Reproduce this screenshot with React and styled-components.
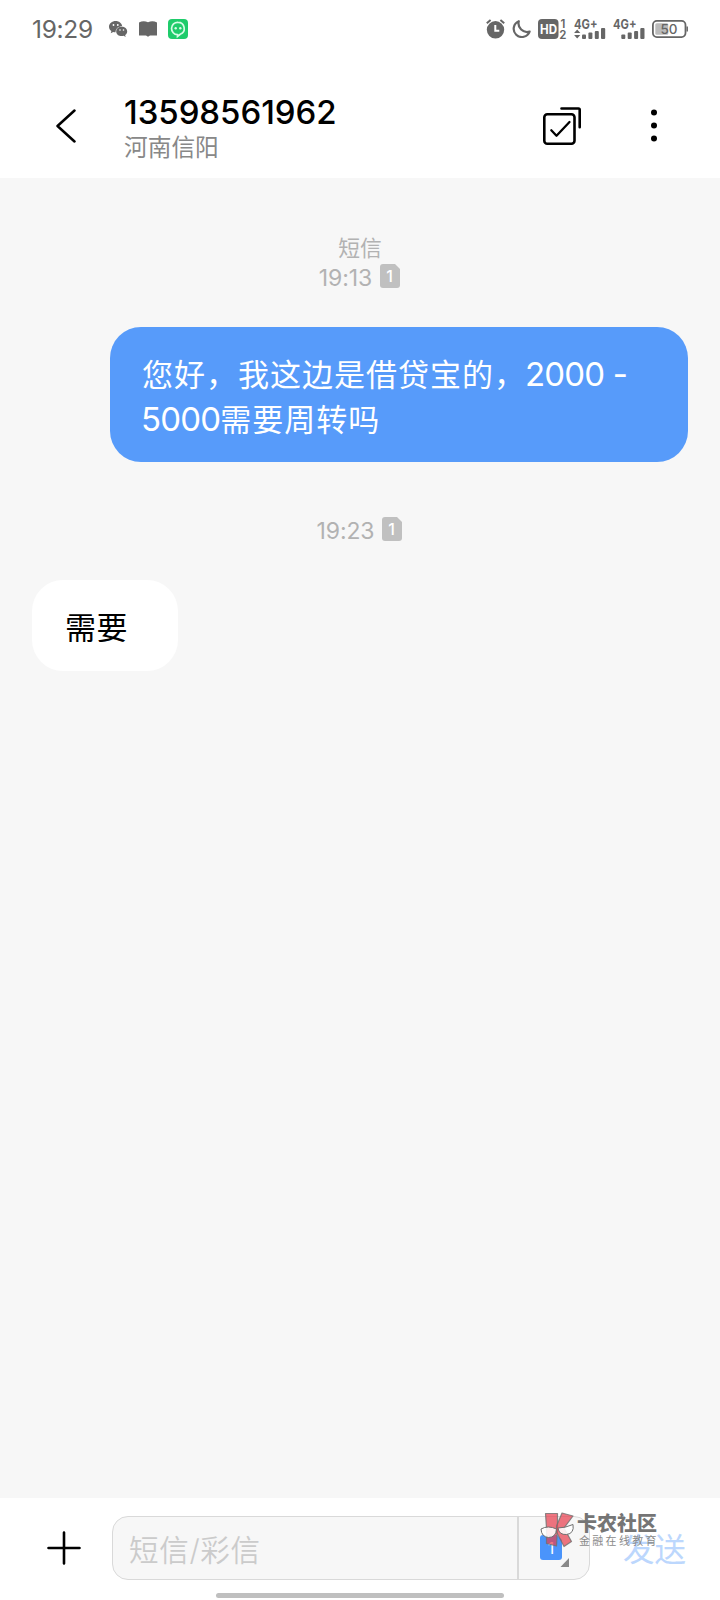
import React from 'react'
import styled, { createGlobalStyle } from 'styled-components';

const GlobalStyle = createGlobalStyle`
  * { box-sizing: border-box; }
  body {
    margin: 0;
    background: #fff;
    font-family: Inter, "Noto Sans CJK SC", sans-serif;
  }
`;

const Screen = styled.div`
  width: 720px;
  height: 1600px;
  display: flex;
  flex-direction: column;
  overflow: hidden;
  background: #fff;
`;

const StatusBar = styled.div`
  height: 58px;
  flex: none;
  display: flex;
  align-items: center;
  padding: 0 32px 0 32px;
  color: #666;
`;

const Clock = styled.span`
  width: 77px;
  font-size: 24.5px;
  line-height: 58px;
  letter-spacing: -0.3px;
`;

const StatusIcons = styled.div`
  display: flex;
  align-items: center;
  gap: ${(p) => p.$gap}px;
  margin-left: ${(p) => (p.$right ? 'auto' : 0)};
  svg { display: block; }
`;

const Header = styled.header`
  height: 120px;
  flex: none;
  display: flex;
  align-items: center;
  padding: 15px 63px 0 55px;

  svg { display: block; flex: none; }
`;

const Contact = styled.div`
  flex: 1;
  margin-left: 47px;
  padding-top: 7px;
`;

const Phone = styled.div`
  font-size: 33px;
  font-weight: 500;
  line-height: 38px;
  letter-spacing: -0.05px;
  color: #000;
`;

const Region = styled.div`
  font-size: 23.7px;
  line-height: 34px;
  color: #888;
`;

const HeaderActions = styled.div`
  display: flex;
  align-items: center;
  gap: 69px;
`;

const Thread = styled.main`
  flex: 1;
  display: flex;
  flex-direction: column;
  padding: 56px 32px 0;
  background: #f7f7f7;
`;

const Stamp = styled.div`
  display: flex;
  flex-direction: column;
  align-items: center;
  color: #b2b2b2;
  font-size: 21.8px;
  line-height: 28px;
`;

const StampRow = styled.div`
  display: flex;
  align-items: center;
  gap: 8px;
  height: 28px;
  padding-right: 1px;
  font-size: 23px;
  letter-spacing: -0.1px;

  span { padding-top: 3px; }
`;

const Bubble = styled.div`
  border-radius: 31px;
  font-size: 31px;
  line-height: 44px;
  letter-spacing: 1px;
`;

const SentBubble = styled(Bubble)`
  align-self: flex-end;
  width: 578px;
  height: 135px;
  margin: 37px 0 53px;
  padding: 25px 32px;
  color: #fff;
  background: #579bfa;
`;

const ReceivedBubble = styled(Bubble)`
  align-self: flex-start;
  width: 146px;
  height: 91px;
  margin-top: 37px;
  padding: 26px 33px;
  letter-spacing: 0.5px;
  color: #000;
  background: #fff;
`;

const Digits = styled.span`
  margin-left: -1px;
  font-size: 33px;
  letter-spacing: -0.8px;
`;

const Footer = styled.footer`
  position: relative;
  height: 102px;
  flex: none;
  display: flex;
  flex-direction: column;
  background: #fff;
`;

const Composer = styled.div`
  display: flex;
  align-items: center;
  padding: 18px 32px 0 47px;

  svg { display: block; flex: none; }
`;

const InputBox = styled.div`
  display: flex;
  width: 478px;
  height: 64px;
  margin-left: 31px;
  border: 1px solid #d9d9d9;
  border-radius: 16px;
  background: #f7f7f7;
`;

const Placeholder = styled.div`
  flex: 1;
  padding: 2px 0 0 16px;
  font-size: 29.5px;
  font-weight: 350;
  line-height: 62px;
  letter-spacing: 0.7px;
  color: #cbcbcb;
`;

const SimPicker = styled.div`
  width: 72px;
  padding: 13px 0 0 21px;
  border-left: 2px solid #d9d9d9;
`;

const Send = styled.div`
  margin-left: 33px;
  padding-top: 4px;
  font-size: 31.5px;
  line-height: 60px;
  white-space: nowrap;
  color: #bcd7fd;
`;

const HomeBar = styled.div`
  width: 288px;
  height: 5px;
  margin: 13px auto 0;
  border-radius: 3px;
  background: #bfbfbf;
`;

// sits on top of the composer
const Watermark = styled.div`
  position: absolute;
  left: 540px;
  top: 14px;
  display: flex;
  gap: 3px;

  svg { display: block; }
`;

const BrandName = styled.div`
  padding-top: 1px;
  font-size: 20px;
  font-weight: 900;
  line-height: 22px;
  white-space: nowrap;
  color: #757575;
`;

const BrandTag = styled.div`
  padding-left: 2px;
  font-size: 11px;
  line-height: 13px;
  letter-spacing: 2.3px;
  white-space: nowrap;
  color: #8a8a8a;
`;

const WechatIcon = () => (
  <svg width="19" height="17" viewBox="0 0 19 17">
    <path fill="#666" d="M6.8 0C3 0 0 2.5 0 5.7c0 1.8.9 3.3 2.4 4.3l-.7 2.2 2.5-1.3c.8.2 1.500.3 2.300.3C6.700 7.500 9.500 5.200 13.200 5.200 12.700 2.200 10 0 6.800 0z" />
    <path fill="#666" d="M12.700 5.800c-3.100 0-5.500 2-5.500 4.600s2.400 4.700 5.500 4.700c.7 0 1.300-.1 1.900-.3l2.100 1.200-.6-1.900c1.300-.9 2.100-2.200 2.100-3.700 0-2.600-2.400-4.600-5.500-4.600z" />
    <g fill="#fff">
      <circle cx="4.500" cy="4" r="0.900" />
      <circle cx="8.800" cy="4" r="0.900" />
      <circle cx="11" cy="9" r="0.800" />
      <circle cx="14.500" cy="9" r="0.800" />
    </g>
  </svg>
)

const BookIcon = () => (
  <svg width="18" height="16" viewBox="0 0 18 16">
    <path fill="#666" d="M0 1.500Q4.500-1 9 1.300Q13.500-1 18 1.500V14.500H11L9 15.700L7 14.500H0z" />
  </svg>
)

const GreenIcon = () => (
  <svg width="20" height="20" viewBox="0 0 20 20">
    <rect width="20" height="20" rx="4" fill="#1fcc6b" />
    <path d="M10 3.300a6.200 6.200 0 0 1 2.200 12L9.500 17.500V15.700A6.200 6.200 0 0 1 10 3.300z" fill="none" stroke="#d8fbe6" strokeWidth="1.700" />
    <circle cx="7.700" cy="9.200" r="1.200" fill="#d8fbe6" />
    <circle cx="12.300" cy="9.200" r="1.200" fill="#d8fbe6" />
  </svg>
)

const AlarmIcon = () => (
  <svg width="19" height="20" viewBox="0 0 19 20">
    <circle cx="9.500" cy="10.800" r="8.700" fill="#666" />
    <path d="M9.300 6v5.800h4" fill="none" stroke="#fff" strokeWidth="2" />
    <path d="M0.800 4.300L4.600 1M18.200 4.300L14.400 1" stroke="#666" strokeWidth="2" />
  </svg>
)

const MoonIcon = () => (
  <svg width="19" height="18" viewBox="0 0 19 18">
    <path d="M6.800 1.200A8.200 8.200 0 1 0 17.600 11.600A8.600 8.600 0 0 1 6.800 1.200z" fill="none" stroke="#666" strokeWidth="2.200" strokeLinejoin="round" />
  </svg>
)

const HdIcon = () => (
  <svg width="29" height="32" viewBox="0 -6 29 32" fontFamily="Inter" fontWeight="700">
    <rect width="20.500" height="20" rx="4" fill="#666" />
    <text x="2" y="14.800" fontSize="13" textLength="17" lengthAdjust="spacingAndGlyphs" fill="#fff">HD</text>
    <text x="22.500" y="8.500" fontSize="11.500" fontWeight="600" fill="#666">1</text>
    <text x="21.300" y="19.800" fontSize="11.500" fontWeight="600" fill="#666">2</text>
  </svg>
)

const SignalIcon = ({ arrows }) => {
  const x = arrows ? 8 : 8.3
  return (
    <svg width="32" height="32" viewBox="0 -6 32 32">
      <text x="0" y="9.500" fontSize="13.500" fontWeight="700" fontFamily="Inter" textLength="23.500" lengthAdjust="spacingAndGlyphs" fill="#666">4G+</text>
      {arrows && <path d="M3.200 10.500L6.300 14H0.100zM3.200 19.500L6.300 16H0.100z" fill="#666" />}
      <g fill="#666">
        <rect x={x} y="15.500" width="4" height="4.500" rx="1" />
        <rect x={x + 6.4} y="13.500" width="4" height="6.500" rx="1" />
        <rect x={x + 12.8} y="12" width="4" height="8" rx="1" />
        <rect x={x + 19} y="9" width="4.200" height="11" rx="1" />
      </g>
    </svg>
  )
}

const BatteryIcon = () => (
  <svg width="36" height="18" viewBox="0 0 36 18">
    <rect x="0.900" y="0.900" width="32.600" height="16.200" rx="4" fill="none" stroke="#666" strokeWidth="1.800" />
    <rect x="3.300" y="3.200" width="13" height="11.600" rx="1.500" fill="#bbb" />
    <path d="M35.200 6.500V11.500" stroke="#666" strokeWidth="1.500" />
    <text x="17" y="13.700" textAnchor="middle" fontSize="13.500" fontWeight="500" fontFamily="Inter" fill="#666">50</text>
  </svg>
)

const BackIcon = () => (
  <svg width="22" height="34" viewBox="0 0 22 34">
    <path d="M19.500 1.500L2.500 17L19.500 32.500" fill="none" stroke="#000" strokeWidth="2.500" strokeLinecap="round" strokeLinejoin="round" />
  </svg>
)

const SelectIcon = () => (
  <svg width="39" height="38" viewBox="0 0 39 38">
    <g fill="none" stroke="#000" strokeWidth="2.600" strokeLinecap="round" strokeLinejoin="round">
      <rect x="1.300" y="7.200" width="30.200" height="29.500" rx="3" />
      <path d="M8.300 23.300L13.500 28.700L26.500 15" strokeWidth="2.300" />
      <path d="M18.500 1.500H35.500Q36.700 1.500 36.700 2.700V20.300" />
    </g>
  </svg>
)

const MoreIcon = () => (
  <svg width="6" height="33" viewBox="0 0 6 33">
    <circle cx="3" cy="3.500" r="3" />
    <circle cx="3" cy="16.500" r="3" />
    <circle cx="3" cy="29.500" r="3" />
  </svg>
)

const SimIcon = () => (
  <svg width="20" height="24" viewBox="0 0 20 24">
    <path d="M3 0H15L20 5V21Q20 24 17 24H3Q0 24 0 21V3Q0 0 3 0z" fill="#c0c0c0" />
    <text x="9.500" y="17.700" textAnchor="middle" fontSize="16" fontWeight="500" fontFamily="Inter" fill="#fff">1</text>
  </svg>
)

const SimPickerIcon = () => (
  <svg width="31" height="38" viewBox="0 0 31 38">
    <path d="M3 5H17L22 10V27Q22 30 19 30H3Q0 30 0 27V8Q0 5 3 5z" fill="#4a94fb" />
    <text x="11" y="23.500" textAnchor="middle" fontSize="16" fontFamily="Inter" fill="#fff">1</text>
    <path d="M29 28V37H20.500z" fill="#888" />
  </svg>
)

const PlusIcon = () => (
  <svg width="34" height="34" viewBox="0 0 34 34">
    <path d="M17 1.500V32.500M1.500 17H32.500" stroke="#000" strokeWidth="2.600" strokeLinecap="round" />
  </svg>
)

const BrandLogo = () => (
  <svg width="34" height="36" viewBox="0 0 34 36">
    <g fill="#e8404f" fillOpacity="0.720" stroke="#707070" strokeOpacity="0.800" strokeWidth="1.200" strokeLinejoin="round">
      <path d="M5.500 1.500H17.500V15L16.500 34L6.500 31.500V16z" />
      <path d="M22 1L33 4L24 16L31.500 29.500L24 34.500L16.500 20V14z" />
    </g>
    <g fill="#fff" fillOpacity="0.880" stroke="#707070" strokeWidth="1">
      <path d="M1 17Q8 13 16.500 17Q16 25.500 8.500 25.500Q1.500 25 1 17z" />
      <path d="M18 16Q25 16 33 12.500Q34.500 21.500 26.500 22.500Q19 23 18 16z" />
    </g>
  </svg>
)

const TimeRow = ({ time }) => (
  <StampRow>
    <span>{time}</span>
    <SimIcon />
  </StampRow>
)

const App = () => {
  return (
    <Screen>
      <GlobalStyle />
      <StatusBar>
        <Clock>19:29</Clock>
        <StatusIcons $gap={11}>
          <WechatIcon />
          <BookIcon />
          <GreenIcon />
        </StatusIcons>
        <StatusIcons $gap={7} $right>
          <AlarmIcon />
          <MoonIcon />
          <HdIcon />
          <SignalIcon arrows />
          <SignalIcon />
          <BatteryIcon />
        </StatusIcons>
      </StatusBar>

      <Header>
        <BackIcon />
        <Contact>
          <Phone>13598561962</Phone>
          <Region>河南信阳</Region>
        </Contact>
        <HeaderActions>
          <SelectIcon />
          <MoreIcon />
        </HeaderActions>
      </Header>

      <Thread>
        <Stamp>
          <span>短信</span>
          <TimeRow time="19:13" />
        </Stamp>
        <SentBubble>
          您好，我这边是借贷宝的，<Digits>2000 -</Digits>
          <br />
          <Digits>5000</Digits>需要周转吗
        </SentBubble>
        <Stamp>
          <TimeRow time="19:23" />
        </Stamp>
        <ReceivedBubble>需要</ReceivedBubble>
      </Thread>

      <Footer>
        <Composer>
          <PlusIcon />
          <InputBox>
            <Placeholder>短信/彩信</Placeholder>
            <SimPicker>
              <SimPickerIcon />
            </SimPicker>
          </InputBox>
          <Send>发送</Send>
        </Composer>
        <HomeBar />
        <Watermark>
          <BrandLogo />
          <div>
            <BrandName>卡农社区</BrandName>
            <BrandTag>金融在线教育</BrandTag>
          </div>
        </Watermark>
      </Footer>
    </Screen>
  )
}

export default App
